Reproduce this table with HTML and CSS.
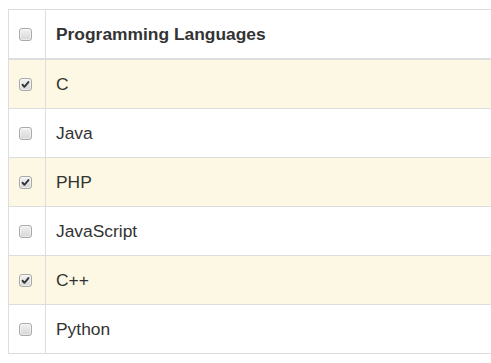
FILE: index.html
```html
<!DOCTYPE html>
<html>
<head>
<meta charset="utf-8">
<link rel="stylesheet" href="styles.css">
</head>
<body>
<table class="langs">
  <thead>
    <tr>
      <th class="sel"><span class="cb"></span></th>
      <th class="name">Programming Languages</th>
    </tr>
  </thead>
  <tbody>
    <tr class="on"><td class="sel"><span class="cb checked"><svg viewBox="0 0 13 13"><path d="M3 6.8 L5.2 9.2 L10 3.6" /></svg></span></td><td>C</td></tr>
    <tr><td class="sel"><span class="cb"></span></td><td>Java</td></tr>
    <tr class="on"><td class="sel"><span class="cb checked"><svg viewBox="0 0 13 13"><path d="M3 6.8 L5.2 9.2 L10 3.6" /></svg></span></td><td>PHP</td></tr>
    <tr><td class="sel"><span class="cb"></span></td><td>JavaScript</td></tr>
    <tr class="on"><td class="sel"><span class="cb checked"><svg viewBox="0 0 13 13"><path d="M3 6.8 L5.2 9.2 L10 3.6" /></svg></span></td><td>C++</td></tr>
    <tr><td class="sel"><span class="cb"></span></td><td>Python</td></tr>
  </tbody>
</table>
</body>
</html>
```
FILE: styles.css
```css
html, body { overflow: hidden; }
body {
  margin: 9px 0 0 8px;
  font-family: "Liberation Sans", Arial, sans-serif;
  font-size: 17.4px;
  color: #333;
  background: #fff;
}
.langs {
  border-collapse: separate;
  border-spacing: 0;
  border-top: 1px solid #ddd;
  border-left: 1px solid #ddd;
  width: 483px;
}
.langs th, .langs td {
  border: 0;
  border-bottom: 1px solid #ddd;
  height: 49px;
  padding: 0 10px;
  text-align: left;
  vertical-align: middle;
  box-sizing: border-box;
}
.langs .sel { border-right: 1px solid #ddd; }
.langs thead th {
  border-bottom: 2px solid #ddd;
  height: 50px;
  font-weight: bold;
}
.langs .sel {
  width: 37px;
  padding: 0 0 0 10px;
}
.langs tr.on td { background: #fcf8e3; }
.cb {
  display: block;
  width: 13px;
  height: 13px;
  box-sizing: border-box;
  border: 1px solid #a9a9a9;
  border-radius: 3px;
  background: linear-gradient(#f2f2f2, #d6d6d6);
  box-shadow: inset 0 0 0 1px rgba(255,255,255,0.5);
}
.cb svg { display: block; width: 11px; height: 11px; }
.cb path { fill: none; stroke: #333; stroke-width: 2.2; stroke-linecap: round; stroke-linejoin: round; }
```
